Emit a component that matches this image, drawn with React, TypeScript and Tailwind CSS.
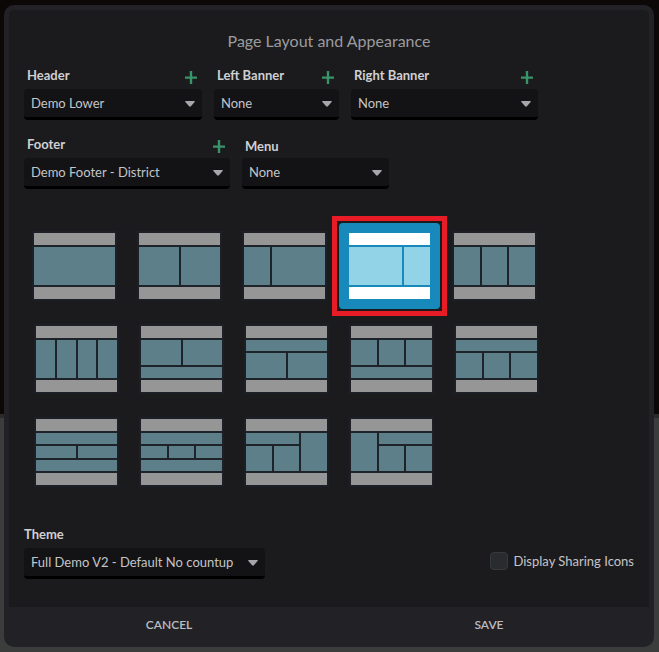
import React, { useState } from "react";

type Rect = [x: number, y: number, w: number, h: number];

// content blocks of each page layout, inside an 81 x 38 body area
const layoutRows: { name: string; blocks: Rect[] }[][] = [
  [
    { name: "One column", blocks: [[0, 0, 81, 38]] },
    { name: "Two columns", blocks: [[0, 0, 40, 38], [42, 0, 39, 38]] },
    { name: "Narrow left column", blocks: [[0, 0, 26, 38], [28, 0, 53, 38]] },
    { name: "Narrow right column", blocks: [[0, 0, 53, 38], [55, 0, 26, 38]] },
    { name: "Three columns", blocks: [[0, 0, 26, 38], [28, 0, 25, 38], [55, 0, 26, 38]] },
  ],
  [
    { name: "Four columns", blocks: [[0, 0, 19, 38], [21, 0, 19, 38], [42, 0, 18, 38], [62, 0, 19, 38]] },
    { name: "Two columns over a row", blocks: [[0, 0, 40, 25], [42, 0, 39, 25], [0, 27, 81, 11]] },
    { name: "Row over two columns", blocks: [[0, 0, 81, 11], [0, 13, 40, 25], [42, 13, 39, 25]] },
    { name: "Three columns over a row", blocks: [[0, 0, 26, 25], [28, 0, 25, 25], [55, 0, 26, 25], [0, 27, 81, 11]] },
    { name: "Row over three columns", blocks: [[0, 0, 81, 11], [0, 13, 26, 25], [28, 13, 25, 25], [55, 13, 26, 25]] },
  ],
  [
    { name: "Two columns between rows", blocks: [[0, 0, 81, 11], [0, 13, 40, 12], [42, 13, 39, 12], [0, 27, 81, 11]] },
    {
      name: "Three columns between rows",
      blocks: [[0, 0, 81, 11], [0, 13, 26, 12], [28, 13, 25, 12], [55, 13, 26, 12], [0, 27, 81, 11]],
    },
    { name: "Split left with right column", blocks: [[0, 0, 53, 11], [0, 13, 26, 25], [28, 13, 25, 25], [55, 0, 26, 38]] },
    { name: "Left column with split right", blocks: [[0, 0, 26, 38], [28, 0, 53, 11], [28, 13, 25, 25], [55, 13, 26, 25]] },
  ],
];

function LayoutTile({
  name,
  blocks,
  selected,
  onSelect,
}: {
  name: string;
  blocks: Rect[];
  selected: boolean;
  onSelect: () => void;
}) {
  const bar = selected ? "fill-white" : "fill-[#969696]";
  const block = selected ? "fill-[#93d3e7]" : "fill-[#5d7f8a]";

  return (
    <button
      type="button"
      aria-label={name}
      aria-pressed={selected}
      onClick={onSelect}
      className={`relative rounded-sm p-[10px] ${selected ? "bg-[#1889bb]" : ""}`}
    >
      <svg
        width="81"
        height="66"
        viewBox="0 0 81 66"
        shapeRendering="crispEdges"
        className={selected ? "" : "bg-[#1e2229] shadow-[0_0_0_2px_#1c1f25]"}
      >
        <rect width="81" height="12" className={bar} />
        {blocks.map(([x, y, w, h]) => (
          <rect key={`${x}-${y}`} x={x} y={y + 14} width={w} height={h} className={block} />
        ))}
        <rect y="54" width="81" height="12" className={bar} />
      </svg>
      {selected ? (
        <span className="pointer-events-none absolute -inset-[7px] border-[5px] border-[#e81c26]" />
      ) : null}
    </button>
  );
}

function SelectField({
  id,
  label,
  value,
  width,
  labelClass = "pl-[3px]",
  addable = false,
}: {
  id: string;
  label: string;
  value: string;
  width: string;
  labelClass?: string;
  addable?: boolean;
}) {
  return (
    <div className={width}>
      <div className={`flex h-6 justify-between pr-[5px] ${labelClass}`}>
        <label htmlFor={id} className="text-[13px] font-bold leading-5 text-[#d0d0d3]">
          {label}
        </label>
        {addable ? (
          <button type="button" aria-label={`Add ${label}`} className="self-center">
            <svg width="12" height="13" viewBox="0 0 12 13" className="fill-[#3a9469]">
              <path d="M4.8 0h2.4v5.6H12v2.2H7.2V13H4.8V7.8H0V5.6h4.8z" />
            </svg>
          </button>
        ) : null}
      </div>
      <div className="relative">
        <select
          id={id}
          defaultValue={value}
          className="block h-[31px] w-full appearance-none rounded-[4px] border-b-[3px] border-black bg-[#131315] pl-[7px] pr-5 text-[13px] leading-5 text-[#c4c4c8] outline-none"
        >
          <option>{value}</option>
        </select>
        <svg
          width="10"
          height="6"
          viewBox="0 0 10 6"
          className="pointer-events-none absolute right-[7px] top-3 fill-[#a6a6ab]"
        >
          <path d="M.8 0h8.4q1.1 0 .4 .9L5.9 5.2q-.9 .9-1.8 0L.4 .9Q-.3 0 .8 0z" />
        </svg>
      </div>
    </div>
  );
}

export default function App() {
  const [selected, setSelected] = useState("Narrow right column");

  return (
    <div className="min-h-screen bg-[linear-gradient(180deg,#0c0808_0px,#0c0808_414px,#2b2a2b_414px,#2b2a2b_418px,#3b3d3c_418px)] py-[5px] pl-1 pr-[5px] font-['Lato',sans-serif]">
      <form
        aria-labelledby="dialog-title"
        className="overflow-hidden rounded-[10px] border-[5px] border-[#222226] bg-[#222226]"
      >
        <div className="rounded-t-[5px] bg-[#1b1b1d] px-[15px] pb-7 pt-[19px]">
          <h1 id="dialog-title" className="text-center text-[16px] leading-6 text-[#9b9b9e]">
            Page Layout and Appearance
          </h1>

          <div className="mt-3 flex flex-wrap gap-3">
            <SelectField id="header" label="Header" value="Demo Lower" width="w-[178px]" addable />
            <SelectField id="left-banner" label="Left Banner" value="None" width="w-[125px]" addable />
            <SelectField id="right-banner" label="Right Banner" value="None" width="w-[187px]" addable />
          </div>

          <div className="mt-[14px] flex flex-wrap gap-3">
            <SelectField id="footer" label="Footer" value="Demo Footer - District" width="w-[206px]" addable />
            <SelectField id="menu" label="Menu" value="None" width="w-[147px]" labelClass="items-center pl-[3px]" />
          </div>

          <div className="mt-[34px] flex flex-col gap-[7px]">
            {layoutRows.map((row, i) => (
              <div key={i} className={`flex gap-1 ${i > 0 ? "pl-[2px]" : ""}`}>
                {row.map((layout) => (
                  <LayoutTile
                    key={layout.name}
                    {...layout}
                    selected={layout.name === selected}
                    onSelect={() => setSelected(layout.name)}
                  />
                ))}
              </div>
            ))}
          </div>

          <div className="mt-[29px] flex items-end justify-between">
            <SelectField
              id="theme"
              label="Theme"
              value="Full Demo V2 - Default No countup"
              width="w-[241px]"
              labelClass="pl-0"
            />
            <label className="mb-2 flex items-center gap-[5px] text-[13px] leading-5 text-[#c4c4c8]">
              <input
                type="checkbox"
                className="size-[18px] appearance-none rounded-[4px] border border-[#38393b] bg-[#2a2b2e] checked:bg-[#1889bb]"
              />
              Display Sharing Icons
            </label>
          </div>
        </div>

        <div className="grid h-[35px] grid-cols-2 text-[12px] font-semibold text-[#bcbcc0]">
          <button type="button">CANCEL</button>
          <button type="button">SAVE</button>
        </div>
      </form>
    </div>
  );
}
